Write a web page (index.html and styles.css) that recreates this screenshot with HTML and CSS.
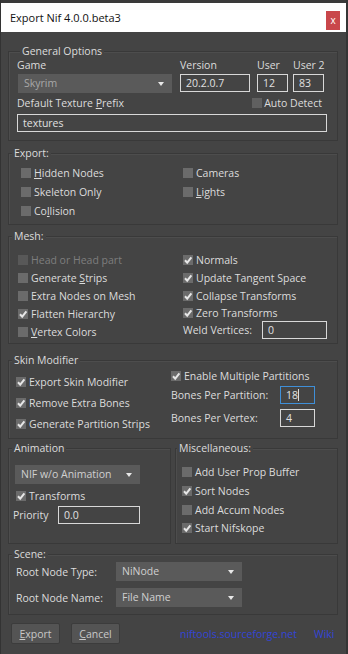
FILE: index.html
```html
<!DOCTYPE html>
<html lang="en">
<head>
    <meta charset="UTF-8">
    <title>Export Nif</title>
    <link rel="stylesheet" href="styles.css">
</head>
<body>
    <div class="window">
        <div class="titlebar">
            <span class="title">Export Nif 4.0.0.beta3</span>
            <span class="close">x</span>
        </div>

        <div class="content">
            <!-- General Options -->
            <div class="group general">
                <div class="gtitle">General Options</div>
                <div class="gen-top">
                    <div class="col col-game">
                        <div class="lbl">Game</div>
                        <div class="dropdown dim">Skyrim<span class="arrow"></span></div>
                    </div>
                    <div class="col col-version">
                        <div class="lbl">Version</div>
                        <div class="input">20.2.0.7</div>
                    </div>
                    <div class="col col-user">
                        <div class="lbl">User</div>
                        <div class="input">12</div>
                    </div>
                    <div class="col col-user2">
                        <div class="lbl">User 2</div>
                        <div class="input">83</div>
                    </div>
                </div>
                <div class="gen-mid">
                    <span>Default Texture <u>P</u>refix</span>
                    <div class="check auto"><span class="cb"></span><span>Auto Detect</span></div>
                </div>
                <div class="input wide">textures</div>
            </div>

            <!-- Export -->
            <div class="group export">
                <div class="gtitle">Export:</div>
                <div class="two-col">
                    <div class="colx left">
                        <div class="check"><span class="cb"></span><span><u>H</u>idden Nodes</span></div>
                        <div class="check"><span class="cb"></span><span>Skeleton Only</span></div>
                        <div class="check"><span class="cb"></span><span>Co<u>l</u>lision</span></div>
                    </div>
                    <div class="colx right">
                        <div class="check"><span class="cb"></span><span>Cameras</span></div>
                        <div class="check"><span class="cb"></span><span><u>L</u>ights</span></div>
                    </div>
                </div>
            </div>

            <!-- Mesh -->
            <div class="group mesh">
                <div class="gtitle">Mesh:</div>
                <div class="two-col">
                    <div class="colx left">
                        <div class="check disabled"><span class="cb"></span><span>Head or Head part</span></div>
                        <div class="check"><span class="cb"></span><span>Generate <u>S</u>trips</span></div>
                        <div class="check"><span class="cb"></span><span>Extra Nodes on Mesh</span></div>
                        <div class="check"><span class="cb on"><svg viewBox="0 0 10 10"><path d="M2 5.2 L4.2 7.6 L8.4 2.4"/></svg></span><span>Flatten Hierarchy</span></div>
                        <div class="check"><span class="cb"></span><span><u>V</u>ertex Colors</span></div>
                    </div>
                    <div class="colx right">
                        <div class="check r18"><span class="cb on"><svg viewBox="0 0 10 10"><path d="M2 5.2 L4.2 7.6 L8.4 2.4"/></svg></span><span>Normals</span></div>
                        <div class="check r18"><span class="cb on"><svg viewBox="0 0 10 10"><path d="M2 5.2 L4.2 7.6 L8.4 2.4"/></svg></span><span>Update Tangent Space</span></div>
                        <div class="check r17"><span class="cb on"><svg viewBox="0 0 10 10"><path d="M2 5.2 L4.2 7.6 L8.4 2.4"/></svg></span><span>Collapse Transforms</span></div>
                        <div class="check r17"><span class="cb on"><svg viewBox="0 0 10 10"><path d="M2 5.2 L4.2 7.6 L8.4 2.4"/></svg></span><span>Zero Transforms</span></div>
                        <div class="field weld"><span>Weld Vertices:</span><div class="input">0</div></div>
                    </div>
                </div>
            </div>

            <!-- Skin Modifier -->
            <div class="group skin">
                <div class="gtitle">Skin Modifier</div>
                <div class="two-col">
                    <div class="skin-left">
                        <div class="check"><span class="cb on"><svg viewBox="0 0 10 10"><path d="M2 5.2 L4.2 7.6 L8.4 2.4"/></svg></span><span>Export Skin Modifier</span></div>
                        <div class="check"><span class="cb on"><svg viewBox="0 0 10 10"><path d="M2 5.2 L4.2 7.6 L8.4 2.4"/></svg></span><span>Remove Extra Bones</span></div>
                        <div class="check"><span class="cb on"><svg viewBox="0 0 10 10"><path d="M2 5.2 L4.2 7.6 L8.4 2.4"/></svg></span><span>Generate Partition Strips</span></div>
                    </div>
                    <div class="skin-right">
                        <div class="check"><span class="cb on"><svg viewBox="0 0 10 10"><path d="M2 5.2 L4.2 7.6 L8.4 2.4"/></svg></span><span>Enable Multiple Partitions</span></div>
                        <div class="field bones"><span>Bones Per Partition:</span><div class="input focus">18<span class="caret"></span></div></div>
                        <div class="field bones"><span>Bones Per Vertex:</span><div class="input">4</div></div>
                    </div>
                </div>
            </div>

            <!-- Animation / Miscellaneous -->
            <div class="row">
                <div class="group anim">
                    <div class="gtitle">Animation</div>
                    <div class="dropdown">NIF w/o Animation<span class="arrow"></span></div>
                    <div class="check"><span class="cb on"><svg viewBox="0 0 10 10"><path d="M2 5.2 L4.2 7.6 L8.4 2.4"/></svg></span><span>Transforms</span></div>
                    <div class="field prio"><span>Priority</span><div class="input">0.0</div></div>
                </div>
                <div class="group misc">
                    <div class="gtitle">Miscellaneous:</div>
                    <div class="check"><span class="cb"></span><span>Add User Prop Buffer</span></div>
                    <div class="check"><span class="cb on"><svg viewBox="0 0 10 10"><path d="M2 5.2 L4.2 7.6 L8.4 2.4"/></svg></span><span>Sort Nodes</span></div>
                    <div class="check"><span class="cb"></span><span>Add Accum Nodes</span></div>
                    <div class="check"><span class="cb on"><svg viewBox="0 0 10 10"><path d="M2 5.2 L4.2 7.6 L8.4 2.4"/></svg></span><span>Start Nifskope</span></div>
                </div>
            </div>

            <!-- Scene -->
            <div class="group scene">
                <div class="gtitle">Scene:</div>
                <div class="field root"><span>Root Node Type:</span><div class="dropdown">NiNode<span class="arrow"></span></div></div>
                <div class="field root"><span>Root Node Name:</span><div class="dropdown">File Name<span class="arrow"></span></div></div>
            </div>

            <div class="footer">
                <button class="btn"><u>E</u>xport</button>
                <button class="btn"><u>C</u>ancel</button>
                <a class="link site">niftools.sourceforge.net</a>
                <a class="link wiki">Wiki</a>
            </div>
        </div>
    </div>
</body>
</html>
```

FILE: styles.css
```css
body {
    margin: 0;
    background-color: #3a3a3a;
    font-family: "Open Sans", "Noto Sans", sans-serif;
    font-size: 10.5px;
    color: #dcdcdc;
}
.window {
    width: 348px;
    height: 654px;
    background-color: #444;
    box-sizing: border-box;
    border-left: 1px solid #333;
    border-right: 2px solid #353535;
    overflow: hidden;
}
.titlebar {
    height: 29px;
    border-top: 3px solid #3a3a3a;
    background-color: #fff;
    display: flex;
    align-items: center;
    justify-content: space-between;
    padding: 0 6px 0 9px;
}
.title {
    color: #111;
    font-size: 11px;
}
.close {
    width: 14px;
    height: 19px;
    background-color: #c9474b;
    color: #fff;
    font-size: 10px;
    display: flex;
    align-items: center;
    justify-content: center;
    margin-top: 5px;
}
.content {
    padding: 0 8px 0 7px;
}

/* group boxes: frame starts at the middle of the title */
.group {
    box-sizing: border-box;
    border: 1px solid #393939;
    box-shadow: inset 1px 1px 0 #4d4d4d;
}
.gtitle {
    display: table;
    line-height: 14px;
    margin: -8px 0 0 3px;
    padding: 0 2px;
    background-color: #444;
    white-space: nowrap;
}
.lbl {
    line-height: 14px;
    white-space: nowrap;
}

/* inputs */
.input {
    box-sizing: border-box;
    height: 18px;
    border: 1px solid #d8d8d8;
    background-color: #444;
    line-height: 16px;
    padding-left: 5px;
    color: #e0e0e0;
}
.input.focus {
    border-color: #3f8fd8;
}
.caret {
    display: inline-block;
    width: 1px;
    height: 12px;
    background-color: #ddd;
    vertical-align: -2px;
}
.dropdown {
    box-sizing: border-box;
    height: 19px;
    background-color: #5a5a5a;
    line-height: 19px;
    padding-left: 6px;
    color: #d0d0d0;
    position: relative;
}
.dropdown.dim {
    color: #a8a8a8;
}
.arrow {
    position: absolute;
    right: 8px;
    top: 8px;
    border-left: 3px solid transparent;
    border-right: 3px solid transparent;
    border-top: 4px solid #e8e8e8;
}

/* checkboxes */
.check {
    display: flex;
    align-items: center;
    height: 19px;
    white-space: nowrap;
}
.cb {
    width: 10px;
    height: 10px;
    background-color: #6b6b6b;
    margin-right: 3px;
    flex: none;
    display: flex;
}
.cb svg {
    width: 10px;
    height: 10px;
}
.cb svg path {
    fill: none;
    stroke: #e6e6e6;
    stroke-width: 2;
}
.check.disabled {
    color: #7e7e7e;
}
.check.disabled .cb {
    background-color: #585858;
}
.field {
    display: flex;
    align-items: center;
    justify-content: space-between;
    white-space: nowrap;
}

/* general */
.general {
    margin-top: 19px;
    height: 90px;
    padding-left: 8px;
}
.gen-top {
    display: flex;
}
.col-game { width: 155px; margin-right: 8px; }
.col-game .dropdown { margin-left: 1px; }
.col-version { width: 70px; margin-right: 7px; }
.col-user { width: 31px; margin-right: 5px; }
.col-user2 { width: 31px; }
.col .lbl { margin-bottom: 2px; }
.gen-mid {
    display: flex;
    justify-content: space-between;
    align-items: center;
    height: 20px;
    padding-right: 15px;
}
.check.auto .cb {
    margin-right: 2px;
    background-color: #606060;
}
.input.wide {
    margin-top: 1px;
    width: 310px;
}

/* export / mesh */
.two-col {
    display: flex;
}
.colx.left {
    box-sizing: border-box;
    width: 162px;
}
.colx.right {
    padding-left: 12px;
}
.export {
    margin-top: 12px;
    height: 72px;
    padding-left: 12px;
}
.export .gtitle {
    margin-left: -9px;
    margin-bottom: 3px;
}
.export .colx.left {
    width: 150px;
}
.mesh {
    margin-top: 11px;
    height: 108px;
    padding-left: 9px;
}
.mesh .gtitle {
    margin-left: -6px;
    margin-bottom: 8px;
}
.mesh .check {
    height: 18px;
}
.mesh .colx.left {
    width: 153px;
}
.check.r17 {
    height: 17px !important;
}
.weld {
    height: 18px;
    width: 144px;
}
.weld .input {
    width: 65px;
}

/* skin */
.skin {
    margin-top: 16px;
    height: 79px;
    padding-left: 7px;
}
.skin .gtitle {
    margin-left: -4px;
}
.skin-left {
    width: 155px;
    padding-top: 4px;
}
.skin-left .check {
    height: 21px;
}
.skin-right {
    width: 144px;
}
.skin-right .check {
    height: 17px;
}
.bones {
    height: 22px;
}
.bones + .bones {
    height: 24px;
}
.bones .input {
    width: 35px;
}

/* animation / misc */
.row {
    display: flex;
    justify-content: space-between;
    margin-top: 9px;
}
.anim {
    width: 163px;
    height: 96px;
    padding-left: 6px;
}
.anim .gtitle {
    margin-left: -3px;
}
.anim .dropdown {
    width: 125px;
    margin-top: 10px;
}
.anim .check {
    margin-top: 2px;
    padding-left: 1px;
    height: 20px;
}
.prio {
    margin: 0 0 0 -2px;
    width: 127px;
}
.prio .input {
    width: 82px;
}
.misc {
    width: 163px;
    height: 96px;
    padding-left: 6px;
}
.misc .gtitle {
    margin-left: -5px;
    margin-bottom: 8px;
}
.misc .check {
    height: 18.7px;
}

/* scene */
.scene {
    margin-top: 10px;
    height: 61px;
    padding-left: 7px;
}
.scene .gtitle {
    margin-left: -4px;
    margin-bottom: 1px;
}
.root {
    width: 226px;
    margin-bottom: 7px;
}
.root .dropdown {
    width: 126px;
}

/* footer */
.footer {
    display: flex;
    align-items: center;
    height: 21px;
    margin-top: 8px;
    padding-left: 3px;
}
.btn {
    box-sizing: border-box;
    width: 49px;
    height: 21px;
    background-color: #545454;
    border: 1px solid #3c3c3c;
    border-radius: 2px;
    color: #c8c8c8;
    font-family: inherit;
    font-size: 10.5px;
    padding: 0;
    margin-right: 11px;
}
.link {
    color: #3344d6;
    white-space: nowrap;
}
.site {
    margin-left: 49px;
}
.wiki {
    margin-left: 17px;
}
```
